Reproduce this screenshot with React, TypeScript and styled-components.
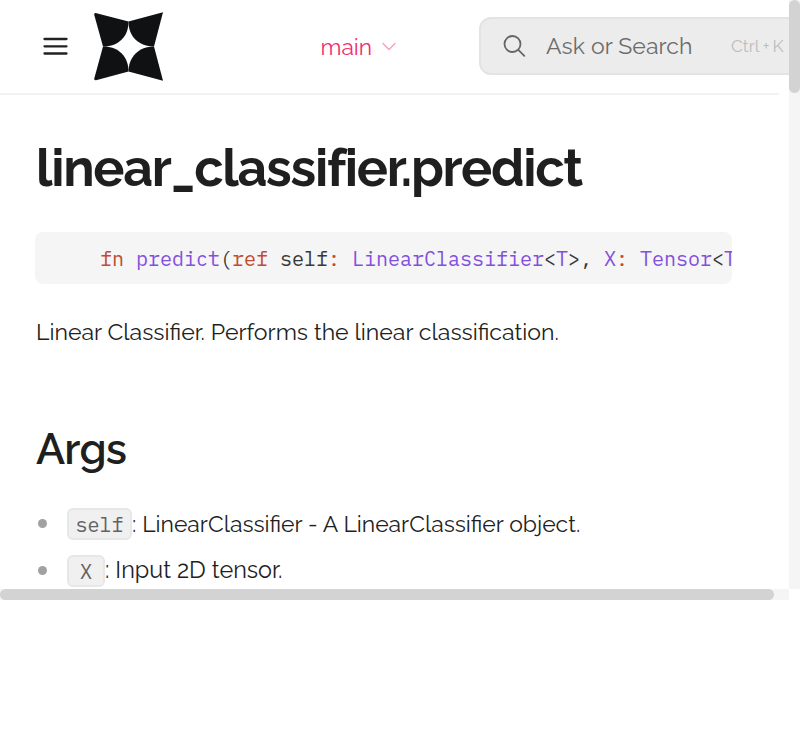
import React from "react";
import styled, { createGlobalStyle } from "styled-components";

const GlobalStyle = createGlobalStyle`
  *, *::before, *::after { box-sizing: border-box; }
  html, body { margin: 0; background: #fff; overflow: hidden; }
  body { font-family: Raleway, Lato, "Open Sans", sans-serif; color: #1f1f1f; }
`;

const Frame = styled.div`
  display: grid;
  grid-template: 589px 11px / 789px 11px;
  width: 800px;
  height: 600px;
`;

const Page = styled.div`
  overflow: hidden;
  white-space: nowrap;
`;

const VerticalTrack = styled.div`
  background: #f5f5f5;
`;

const HorizontalTrack = styled.div`
  background: #f5f5f5;
`;

const Thumb = styled.div<{ $width: number; $height: number }>`
  width: ${(p) => p.$width}px;
  height: ${(p) => p.$height}px;
  border-radius: 6px;
  background: #d3d3d3;
`;

const Header = styled.header`
  display: flex;
  align-items: center;
  width: 779px;
  height: 95px;
  padding: 0 0 1px 43px;
  border-bottom: 2px solid #f2f2f2;
`;

const IconButton = styled.button`
  display: flex;
  padding: 0;
  border: 0;
  background: none;
`;

const LogoLink = styled.a`
  display: flex;
  margin-left: 25px;
  padding-top: 1px;
`;

const VersionButton = styled.button`
  display: flex;
  align-items: center;
  justify-content: space-between;
  width: 77px;
  flex: none;
  margin-left: 156px;
  padding: 2px 0 0 0.5px;
  border: 0;
  background: none;
  color: #f03070;
  font: 400 22.8px/30px Raleway, Lato, sans-serif;
`;

const SearchBox = styled.div`
  display: flex;
  align-items: center;
  flex: none;
  width: 330px;
  height: 58px;
  margin-left: 82px;
  padding-left: 22px;
  border: 2px solid #e3e3e3;
  border-radius: 12px;
  background: #ececec;
  color: #6c6c6c;
`;

const SearchLabel = styled.span`
  width: 185px;
  margin: -2px 0 0 20px;
  font-size: 23.04px;
  letter-spacing: 0.08px;
`;

const Shortcut = styled.kbd`
  display: flex;
  gap: 3px;
  font: 400 17.28px/24px Raleway, Lato, sans-serif;
  color: #bdbdbd;
`;

const Article = styled.main`
  padding: 42px 0 0 36px;
`;

const Title = styled.h1`
  margin: 0;
  font-size: 52px;
  line-height: 62px;
  font-weight: 700;
  letter-spacing: -1.26px;
`;

const CodeBlock = styled.pre`
  width: 697px;
  height: 52px;
  margin: 33px 0 0 -1px;
  padding-left: 17px;
  overflow: hidden;
  border-radius: 8px;
  background: #f5f5f5;
  color: #383838;
  font: 400 20px/54px "IBM Plex Mono", "Liberation Mono", monospace;
`;

const Token = styled.span<{ $kind: "keyword" | "type" }>`
  color: ${(p) => (p.$kind === "keyword" ? "#c24a32" : "#8250df")};
`;

const Paragraph = styled.p`
  margin: 31px 0 0;
  font-size: 23.08px;
  line-height: 34px;
`;

const Section = styled.h2`
  margin: 73px 0 0;
  font-size: 43.2px;
  line-height: 54px;
  font-weight: 600;
  letter-spacing: -0.8px;
`;

const List = styled.ul`
  display: grid;
  gap: 15px;
  margin: 32px 0 0;
  padding: 0;
  list-style: none;
`;

const Item = styled.li`
  display: flex;
  align-items: center;
  height: 32px;
  padding-left: 2px;
`;

const Bullet = styled.span`
  width: 9px;
  height: 9px;
  margin: -2px 20px 0 0;
  border-radius: 50%;
  background: #a1a1a1;
`;

const Code = styled.code<{ $width: number }>`
  width: ${(p) => p.$width}px;
  height: 32px;
  border: 2px solid #e7e7e7;
  border-radius: 6px;
  background: #f0f0f0;
  color: #626262;
  text-align: center;
  font: 400 20px/30px "IBM Plex Mono", "Liberation Mono", monospace;
`;

const Description = styled.span<{ $size: number; $lift?: number }>`
  font-size: ${(p) => p.$size}px;
  line-height: 32px;
  padding-bottom: ${(p) => p.$lift ?? 0}px;
`;

const MenuIcon = () => (
  <svg width="26" height="20" viewBox="0 0 26 20" fill="none" stroke="#222" strokeWidth="2.3" strokeLinecap="round">
    <path d="M1.5 3h22M1.5 10.3h22M1.5 17.5h22" />
  </svg>
);

const Logo = () => (
  <svg width="70" height="70" viewBox="0 0 70 70" fill="#101113">
    <path d="M1.6 1.1 34.5 9.6V10C34.5 24 25 34.5 9 34.5L.2 2.8Q0 1 1.6 1.1Z" />
    <path d="M69 .3 34.5 9.6C34.5 25 45 34.5 60 34.5Z" />
    <path d="M9 34.5C25 34.5 34.5 45 34.5 59.4L2 68.2Q0 68.4.2 66.8Z" />
    <path d="M60 34.5C45 34.5 34.5 45 34.5 59.4L69 68.8Z" />
  </svg>
);

const Chevron = () => (
  <svg width="16" height="12" viewBox="0 0 16 12" fill="none" stroke="#f8a4c0" strokeWidth="1.5" strokeLinecap="round" strokeLinejoin="round">
    <path d="m2 2.5 6 6 6-6" />
  </svg>
);

const SearchIcon = () => (
  <svg width="23" height="23" viewBox="0 0 23 23" fill="none" stroke="#666" strokeWidth="1.8" strokeLinecap="round">
    <circle cx="9.5" cy="9" r="8" />
    <path d="m15.3 14.8 6 6" />
  </svg>
);

export default function App() {
  return (
    <>
      <GlobalStyle />
      <Frame>
        <Page>
          <Header>
            <IconButton aria-label="Menu"><MenuIcon /></IconButton>
            <LogoLink aria-label="Home"><Logo /></LogoLink>
            <VersionButton>main<Chevron /></VersionButton>
            <SearchBox>
              <SearchIcon />
              <SearchLabel>Ask or Search</SearchLabel>
              <Shortcut><span>Ctrl</span><span>+</span><span>K</span></Shortcut>
            </SearchBox>
          </Header>
          <Article>
            <Title>linear_classifier.predict</Title>
            <CodeBlock>
              {"    "}<Token $kind="keyword">fn</Token> <Token $kind="type">predict</Token>(
              <Token $kind="keyword">ref</Token> self<Token $kind="keyword">:</Token>{" "}
              <Token $kind="type">LinearClassifier</Token>&lt;<Token $kind="type">T</Token>&gt;,{" "}
              <Token $kind="type">X</Token><Token $kind="keyword">:</Token>{" "}
              <Token $kind="type">Tensor</Token>&lt;<Token $kind="type">T</Token>
            </CodeBlock>
            <Paragraph>Linear Classifier. Performs the linear classification.</Paragraph>
            <Section>Args</Section>
            <List>
              <Item>
                <Bullet />
                <Code $width={65}>self</Code>
                <Description $size={22.95}>: LinearClassifier - A LinearClassifier object.</Description>
              </Item>
              <Item>
                <Bullet />
                <Code $width={38}>X</Code>
                <Description $size={23.4} $lift={2}>: Input 2D tensor.</Description>
              </Item>
            </List>
          </Article>
        </Page>
        <VerticalTrack><Thumb $width={11} $height={93} /></VerticalTrack>
        <HorizontalTrack><Thumb $width={774} $height={11} /></HorizontalTrack>
      </Frame>
    </>
  );
}
